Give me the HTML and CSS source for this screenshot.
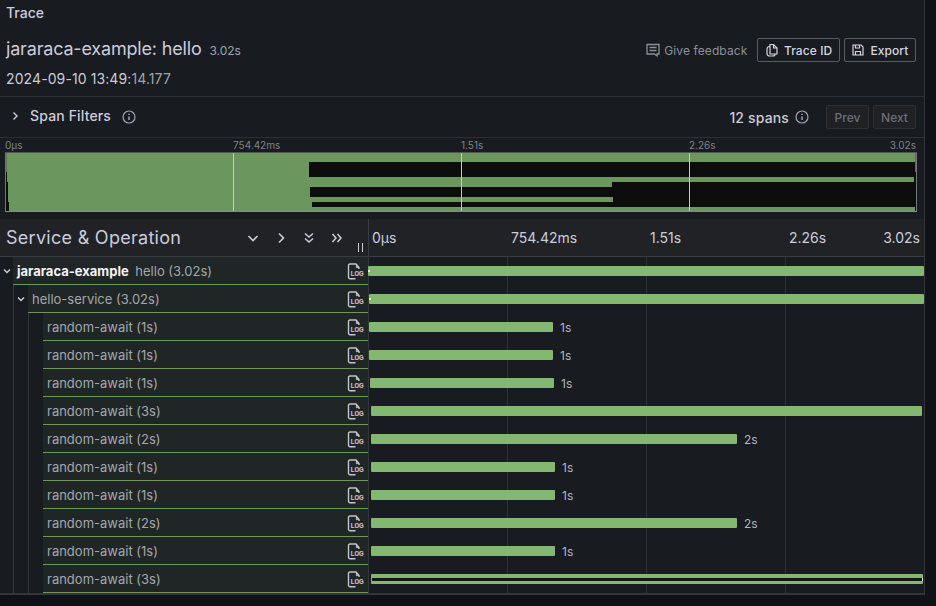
FILE: index.html
```html
<!DOCTYPE html>
<html lang="en">
<head>
  <meta charset="UTF-8" />
  <title>Trace</title>
  <link rel="stylesheet" href="styles.css">
</head>
<body>
  <div class="panel">
    <div class="panel-title">Trace</div>

    <div class="trace-head">
      <div>
        <h1 class="trace-name">jararaca-example: hello <small>3.02s</small></h1>
        <div class="trace-date">2024-09-10 13:49:<span>14.177</span></div>
      </div>
      <div class="head-actions">
        <a class="feedback">
          <svg width="16" height="16" viewBox="0 0 16 16" fill="none" stroke="currentColor" stroke-width="1.3"><path d="M2 2.500h12v9.500h-2v2l-2.500-2H2z"/><path d="M4.500 5.500h7M4.500 8.500h7"/></svg>
          Give feedback
        </a>
        <button class="btn">
          <svg width="14" height="14" viewBox="0 0 14 14" fill="none" stroke="currentColor" stroke-width="1.2"><path d="M5 1.500h3.500l3.500 3.500v6H5z"/><path d="M8.500 1.500V5H12"/><path d="M5 3.500H4a2.500 2.500 0 0 0-2 2.500v4.500A2.500 2.500 0 0 0 4.500 13H8a2 2 0 0 0 2-2"/></svg>
          Trace ID
        </button>
        <button class="btn">
          <svg width="14" height="14" viewBox="0 0 14 14" fill="none" stroke="currentColor" stroke-width="1.2"><path d="M2 2h8l2 2v8H2z"/><path d="M4.500 2v3h4V2M4.500 12V8.500h5V12"/></svg>
          Export
        </button>
      </div>
    </div>

    <div class="filters">
      <div class="filters-left">
        <svg width="12" height="12" viewBox="0 0 12 12" fill="none" stroke="currentColor" stroke-width="1.4"><path d="M4.500 2.500 8 6 4.500 9.500"/></svg>
        <span class="filters-label">Span Filters</span>
        <svg class="info" width="16" height="16" viewBox="0 0 16 16" fill="none" stroke="currentColor" stroke-width="1.2"><circle cx="8" cy="8" r="6"/><path d="M8 7.500v3.500M8 4.800v1.200" stroke-width="1.500"/></svg>
      </div>
      <div class="filters-right">
        <span class="span-count">12 spans</span>
        <svg class="info" width="16" height="16" viewBox="0 0 16 16" fill="none" stroke="currentColor" stroke-width="1.2"><circle cx="8" cy="8" r="6"/><path d="M8 7.500v3.500M8 4.800v1.200" stroke-width="1.500"/></svg>
        <button class="btn-off btn-prev">Prev</button>
        <button class="btn-off">Next</button>
      </div>
    </div>

    <div class="minimap">
      <div class="minimap-ticks">
        <span>0µs</span><span>754.42ms</span><span>1.51s</span><span>2.26s</span><span>3.02s</span>
      </div>
      <svg class="minimap-canvas" width="912" height="60" viewBox="0 0 912 60">
        <rect width="912" height="60" fill="#0d0d0d"/>
        <rect x="2" width="908" height="10" fill="#6b965d"/>
        <rect x="2" y="10" width="302" height="15" fill="#6b965d"/>
        <rect x="2" y="25" width="907" height="5" fill="#6b965d"/>
        <rect x="3" y="30" width="604" height="5" fill="#6b965d"/>
        <rect x="3" y="35" width="302" height="10" fill="#6b965d"/>
        <rect x="3" y="45" width="605" height="5" fill="#6b965d"/>
        <rect x="4" y="50" width="303" height="5" fill="#6b965d"/>
        <rect x="4" y="55" width="906" height="4" fill="#6b965d"/>
        <rect x="228" width="1" height="59" fill="#c9cbc6"/>
        <rect x="456" width="1" height="59" fill="#c9cbc6"/>
        <rect x="684" width="1" height="59" fill="#c9cbc6"/>
        <rect width="2" height="20" fill="#666"/>
        <rect x="910" width="2" height="20" fill="#666"/>
        <rect x="0" width="1" height="60" fill="#777"/>
        <rect x="911" width="1" height="60" fill="#777"/>
        <rect y="59" width="912" height="1" fill="#8a8a8a"/>
        <rect width="912" height="1" fill="#555"/>
      </svg>
    </div>

    <div class="table-head">
      <div class="head-service">
        <span class="head-label">Service &amp; Operation</span>
        <svg class="head-icon" width="14" height="14" viewBox="0 0 14 14" fill="none" stroke="currentColor" stroke-width="1.6"><path d="M2.500 5 7 9.500 11.500 5"/></svg>
        <svg class="head-icon" width="14" height="14" viewBox="0 0 14 14" fill="none" stroke="currentColor" stroke-width="1.600"><path d="M5 2.500 9.500 7 5 11.500"/></svg>
        <svg class="head-icon" width="14" height="14" viewBox="0 0 14 14" fill="none" stroke="currentColor" stroke-width="1.500"><path d="M3 2.500 7 6l4-3.500M3 7.500 7 11l4-3.500"/></svg>
        <svg class="head-icon" width="14" height="14" viewBox="0 0 14 14" fill="none" stroke="currentColor" stroke-width="1.500"><path d="M2.500 3 6 7l-3.500 4M7.500 3 11 7l-3.500 4"/></svg>
        <span class="resizer"></span>
      </div>
      <div class="head-times">
        <span>0µs</span><span>754.42ms</span><span>1.51s</span><span>2.26s</span><span>3.02s</span>
      </div>
    </div>

    <div id="rows"></div>
  </div>

  <script>
    const spans = [
      { depth: 0, service: "jararaca-example", name: "hello (3.02s)", left: -1, width: 556, tick: true },
      { depth: 1, name: "hello-service (3.02s)", left: 0, width: 555, tick: true },
      { depth: 2, name: "random-await (1s)", left: 0, width: 184, label: "1s" },
      { depth: 2, name: "random-await (1s)", left: 0, width: 184, label: "1s" },
      { depth: 2, name: "random-await (1s)", left: 1, width: 184, label: "1s" },
      { depth: 2, name: "random-await (3s)", left: 2, width: 551 },
      { depth: 2, name: "random-await (2s)", left: 2, width: 366, label: "2s" },
      { depth: 2, name: "random-await (1s)", left: 2, width: 184, label: "1s" },
      { depth: 2, name: "random-await (1s)", left: 2, width: 184, label: "1s" },
      { depth: 2, name: "random-await (2s)", left: 2, width: 366, label: "2s" },
      { depth: 2, name: "random-await (1s)", left: 2, width: 184, label: "1s" },
      { depth: 2, name: "random-await (3s)", left: 2, width: 552, hollow: true }
    ];

    const chevron = '<svg width="10" height="10" viewBox="0 0 10 10" fill="none" stroke="currentColor" stroke-width="1.400"><path d="M2 3.500 5 6.500 8 3.500"/></svg>';
    const logIcon = '<svg class="log-icon" width="17" height="17" viewBox="0 0 17 17" fill="none" stroke="currentColor" stroke-width="1.400">' +
      '<path d="M8.500 15.700H3A1.500 1.500 0 0 1 1.500 14.200V2.500A1.500 1.500 0 0 1 3 1h6l3 3.500v1.500"/><path d="M9.300 1.800v2.900h2.400z" fill="currentColor" stroke-width=".6"/>' +
      '<text x="3.800" y="12.600" fill="currentColor" stroke="currentColor" stroke-width=".2" font-family="Liberation Sans" font-size="6.600" font-weight="700" textLength="12.800" lengthAdjust="spacingAndGlyphs">LOG</text></svg>';

    let html = "";
    spans.forEach(s => {
      let guides = "";
      if (s.depth >= 1) guides += '<span class="guide"></span>';
      if (s.depth === 2) guides += '<span class="guide"></span><span class="guide-blank"></span>';
      const toggle = s.depth < 2 ? '<span class="toggle depth-' + s.depth + '">' + chevron + "</span>" : "";
      const service = s.service ? "<strong>" + s.service + "</strong> " : "";
      let bar = '<span class="bar' + (s.hollow ? " hollow" : "") + '" style="margin-left:' + s.left + "px;width:" + s.width + 'px">';
      if (s.tick) bar += '<i class="bar-tick"></i>';
      bar += "</span>";
      if (s.label) bar += '<span class="bar-label">' + s.label + "</span>";
      html += '<div class="row"><div class="row-name">' + guides + toggle +
        '<div class="row-text"><span class="row-title">' + service + s.name + "</span>" + logIcon + "</div></div>" +
        '<div class="row-bar">' + bar + "</div></div>";
    });
    document.getElementById("rows").innerHTML = html;
  </script>
</body>
</html>
```

FILE: styles.css
```css
* {
  box-sizing: border-box;
}

html, body {
  height: 100%;
}

body {
  margin: 0;
  background: #111217;
  color: #ccccdc;
  font-family: Inter, "Liberation Sans", sans-serif;
  overflow: hidden;
}

.panel {
  width: 925px;
  height: 595px;
  background: #181b1f;
  border-right: 1px solid #34363b;
  border-bottom: 2px solid #34363b;
  overflow: hidden;
}

.panel-title {
  height: 25px;
  padding: 4px 0 0 6px;
  font-size: 14px;
  font-weight: 500;
  line-height: 17px;
}

/* header */
.trace-head {
  display: flex;
  justify-content: space-between;
  height: 72px;
  padding: 13px 8px 0 6px;
  border-bottom: 1px solid #2d2f33;
}

.trace-name {
  margin: 0;
  font-size: 18px;
  font-weight: 400;
  line-height: 22px;
  letter-spacing: -0.18px;
}

.trace-name small {
  margin-left: 3px;
  font-size: 12px;
  letter-spacing: 0;
  color: #a1a3b0;
}

.trace-date {
  margin-top: 7px;
  font-size: 14px;
  line-height: 20px;
  letter-spacing: 0.1px;
}

.trace-date span {
  color: #a1a3b0;
}

.head-actions {
  display: flex;
  align-items: flex-start;
  gap: 4px;
}

.feedback {
  display: flex;
  align-items: center;
  gap: 3px;
  height: 24px;
  margin-right: 6px;
  font-size: 12px;
  letter-spacing: 0.1px;
  color: #8e9099;
}

.btn {
  display: flex;
  align-items: center;
  gap: 5px;
  height: 24px;
  padding: 0 6.5px;
  background: transparent;
  border: 1px solid #5a5c63;
  border-radius: 2px;
  color: #d5d5e2;
  font: 500 12px Inter, sans-serif;
  letter-spacing: 0.1px;
}

/* span filters */
.filters {
  display: flex;
  justify-content: space-between;
  align-items: center;
  height: 41px;
  padding: 0 8px 0 9px;
  border-bottom: 1px solid #2d2f33;
}

.filters-left,
.filters-right {
  display: flex;
  align-items: center;
}

.filters-left {
  padding-bottom: 3px;
}

.filters-label {
  margin-left: 9px;
  font-size: 14px;
  font-weight: 500;
  letter-spacing: 0.15px;
}

.filters-left .info {
  margin: 2px 0 0 10px;
  color: #a1a3b0;
}

.span-count {
  font-size: 14px;
  font-weight: 500;
  letter-spacing: 0.15px;
}

.filters-right .info {
  margin-left: 5px;
  color: #a1a3b0;
}

.btn-off {
  width: 43px;
  height: 24px;
  margin-left: 4px;
  padding: 0;
  background: #1f2125;
  border: 1px solid #2d2f33;
  border-radius: 2px;
  color: #6c6e75;
  font: 500 12px Inter, sans-serif;
}

.btn-prev {
  margin-left: 16px;
}

/* minimap */
.minimap {
  height: 81px;
  padding: 0 8px 0 5px;
}

.minimap-ticks {
  display: flex;
  height: 14px;
  font-size: 10px;
  line-height: 14px;
  color: #808289;
}

.minimap-ticks span {
  flex: none;
  width: 228px;
}

.minimap-ticks span:nth-child(4) {
  flex: 1;
  width: auto;
}

.minimap-ticks span:last-child {
  width: auto;
}

.minimap-canvas {
  display: block;
}

/* table header */
.table-head {
  display: flex;
  height: 38px;
  background: #202226;
  border-bottom: 1px solid #3a3c40;
}

.head-service {
  position: relative;
  display: flex;
  flex: none;
  align-items: center;
  width: 369px;
  padding-left: 6px;
  border-right: 1px solid #3a3c40;
}

.head-label {
  width: 240px;
  font-size: 18px;
  line-height: 24px;
  letter-spacing: 0.28px;
}

.head-icon {
  margin-right: 14px;
}

.resizer {
  position: absolute;
  right: 5px;
  bottom: 4px;
  width: 5px;
  height: 9px;
  border-left: 1px solid #ccccdc;
  border-right: 1px solid #ccccdc;
}

.head-times {
  display: flex;
  flex: 1;
  align-items: center;
  padding: 0 4px 0 3px;
  font-size: 14px;
}

.head-times span {
  flex: none;
  width: 139px;
}

.head-times span:nth-child(4) {
  flex: 1;
  width: auto;
}

.head-times span:last-child {
  width: auto;
}

/* rows */
.row {
  display: flex;
  height: 28px;
}

.row-name {
  display: flex;
  flex: none;
  width: 369px;
  border-right: 1px solid #34363b;
}

.guide {
  width: 15px;
  border-right: 1px solid #34363b;
}

.guide:first-child {
  width: 14px;
}

.guide-blank {
  width: 14px;
}

.toggle {
  display: flex;
  flex: none;
  align-items: center;
  justify-content: center;
  width: 14px;
  color: #ccccdc;
}

.toggle.depth-0 {
  width: 13px;
}

.row-text {
  display: flex;
  flex: 1;
  align-items: center;
  justify-content: space-between;
  padding: 0 4px;
  background: #202626;
  border-bottom: 1px solid #6b965d;
}

.row-title {
  font-size: 13px;
  color: #a5a6ad;
}

.row-title strong {
  margin-right: 3px;
  font-weight: 700;
  color: #f3f3f6;
}

.log-icon {
  margin-top: 2px;
  color: #c4c4d0;
}

.row-bar {
  display: flex;
  flex: 1;
  align-items: center;
  background:
    linear-gradient(#2d2f33, #2d2f33) no-repeat 138px 0 / 1px 100%,
    linear-gradient(#2d2f33, #2d2f33) no-repeat 277px 0 / 1px 100%,
    linear-gradient(#2d2f33, #2d2f33) no-repeat 416px 0 / 1px 100%;
}

.bar {
  position: relative;
  height: 10px;
  background: #82b86f;
  border-radius: 1px;
}

.bar.hollow {
  background: linear-gradient(#82b86f 4px, #14161a 4px, #14161a 7px, #82b86f 7px);
  border-left: 1px solid #82b86f;
}

.bar.hollow::after {
  content: "";
  position: absolute;
  right: 0;
  top: 4px;
  width: 1px;
  height: 3px;
  background: #f0f0f0;
}

.bar-tick {
  position: absolute;
  left: 0;
  top: 4px;
  width: 2px;
  height: 2px;
  background: #dfe8da;
}

.bar-label {
  margin-left: 7px;
  font-size: 12px;
  color: #b3b4c0;
}
```
